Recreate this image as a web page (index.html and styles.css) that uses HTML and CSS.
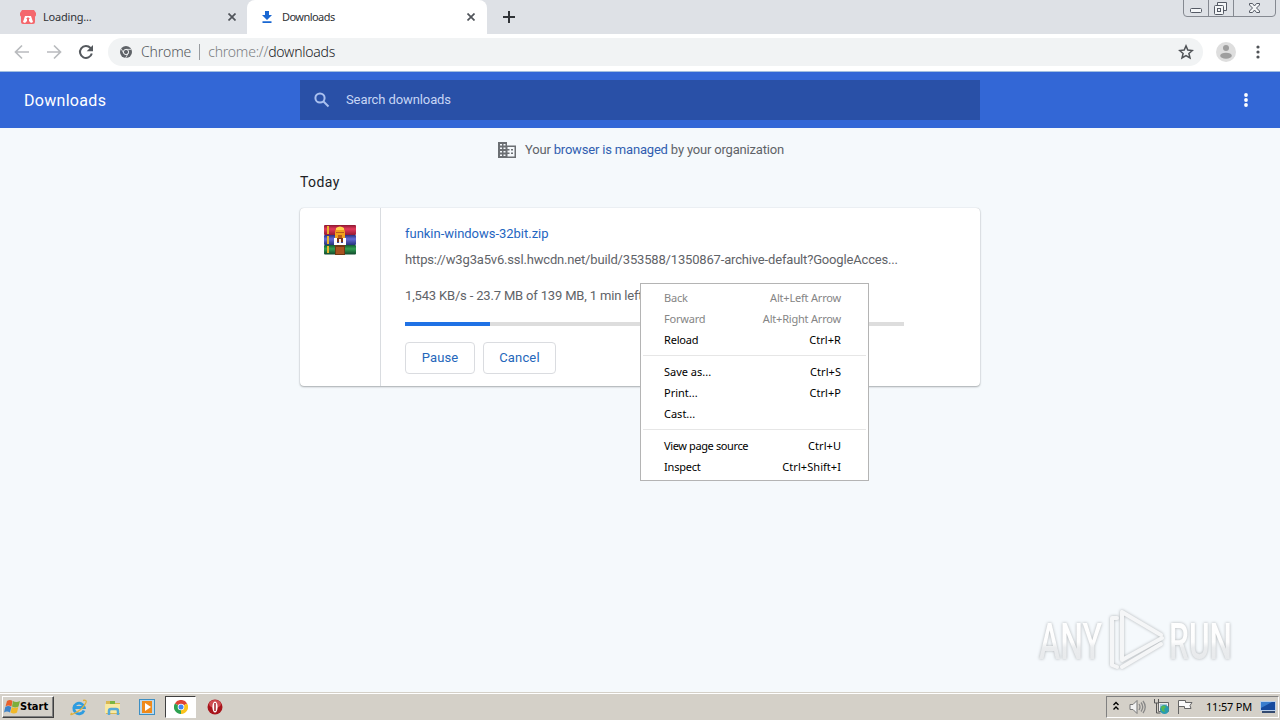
FILE: index.html
```html
<!DOCTYPE html>
<html lang="en">
<head>
<meta charset="utf-8">
<title>Downloads</title>
<link rel="stylesheet" href="styles.css">
</head>
<body>
<div class="screen">
  <header class="tabstrip">
    <div class="tab tab-idle">
      <svg class="favicon" width="16" height="16" viewBox="0 0 16 16"><path fill="#f4686d" d="M2 1h12l2 3v2a2 2 0 0 1-1 1.600V13q0 2-2 2H3q-2 0-2-2V7.600A2 2 0 0 1 0 6V4z"/><path fill="#fff" d="M5 7h6l2 6-2 1-2-2H7l-2 2-2-1z"/><path fill="#f4686d" d="M8 8l2 2H9v2H7v-2H6z"/></svg>
      <span class="tab-title">Loading...</span>
      <svg class="tab-close" width="8" height="8" viewBox="0 0 8 8"><path d="M.5.5l7 7M7.500.5l-7 7"/></svg>
    </div>
    <div class="tab tab-active">
      <svg class="favicon" width="16" height="16" viewBox="0 0 16 16"><path fill="#1967d2" d="M6 2h4v4h3L8 11 3 6h3zM3.500 12.300h9V14h-9z"/></svg>
      <span class="tab-title">Downloads</span>
      <svg class="tab-close" width="8" height="8" viewBox="0 0 8 8"><path d="M.5.5l7 7M7.500.5l-7 7"/></svg>
    </div>
    <svg class="new-tab" width="12" height="12" viewBox="0 0 12 12"><path d="M6 0v12M0 6h12"/></svg>
    <svg class="window-buttons" width="94" height="18" viewBox="0 0 94 18">
      <path class="frame" d="M.5 0v13q0 3.500 3.500 3.500h85q3.500 0 3.500-3.500V0M25.500 0v16M50.500 0v16"/>
      <rect class="glyph" x="7.500" y="8.500" width="11" height="4" rx="1"/>
      <path class="glyph" d="M34.500 5V2.500h9v8H41"/><rect class="glyph" x="31.500" y="5.500" width="9" height="9" rx="1"/><rect class="glyph" x="34.500" y="8.500" width="3" height="3"/>
      <path class="glyph" d="M66.500 3.500h3l2 2.500 2-2.500h3V5l-3 3 3 3v1.500h-3l-2-2.500-2 2.500h-3V11l3-3-3-3z"/>
    </svg>
  </header>

  <nav class="toolbar">
    <svg class="nav-icon muted" width="16" height="16" viewBox="0 0 16 16"><path d="M15 8H2M8 1.500L1.500 8 8 14.500"/></svg>
    <svg class="nav-icon muted" width="16" height="16" viewBox="0 0 16 16"><path d="M1 8h13M8 1.500L14.500 8 8 14.500"/></svg>
    <svg class="nav-icon" width="16" height="16" viewBox="0 0 16 16"><path d="M13.800 9.500A6 6 0 1 1 12.500 4L14 5.500"/><path class="solid" d="M15 1v6.300H8.700z"/></svg>
    <div class="omnibox">
      <svg class="site-icon" width="12" height="12" viewBox="0 0 12 12"><circle cx="6" cy="6" r="6" fill="#5f6368"/><circle cx="6" cy="6" r="2.600" fill="#5f6368" stroke="#f1f3f4" stroke-width="1"/><path stroke="#f1f3f4" stroke-width=".8" fill="none" d="M6 3.400h5.300M3.800 7.300L1.100 2.700M8.200 7.300L5.600 12"/></svg>
      <span class="site-name">Chrome</span><span class="site-rule"></span>
      <span class="address"><span class="scheme">chrome://</span>downloads</span>
      <svg class="star" width="16" height="16" viewBox="0 0 16 16"><path d="M8 1.900l1.800 4.200 4.600.4-3.500 3 1.100 4.500L8 11.600 4 14l1.100-4.500-3.500-3 4.600-.4z"/></svg>
    </div>
    <svg class="avatar" width="20" height="20" viewBox="0 0 20 20"><circle cx="10" cy="10" r="10" fill="#dedede"/><circle cx="10" cy="6" r="3" fill="#9e9e9e"/><ellipse cx="10" cy="13.700" rx="5.800" ry="3" fill="#9e9e9e"/></svg>
    <svg class="dots" width="4" height="14" viewBox="0 0 4 14"><circle cx="2" cy="2" r="1.600"/><circle cx="2" cy="7" r="1.600"/><circle cx="2" cy="12" r="1.600"/></svg>
  </nav>

  <section class="app-bar">
    <h1 class="app-title">Downloads</h1>
    <div class="search">
      <svg width="16" height="16" viewBox="0 0 16 16"><circle cx="6" cy="6" r="4.600"/><path d="M9.500 9.500l5 5"/></svg>
      <span class="search-hint">Search downloads</span>
    </div>
    <svg class="dots light" width="4" height="14" viewBox="0 0 4 14"><circle cx="2" cy="2" r="1.900"/><circle cx="2" cy="7" r="1.900"/><circle cx="2" cy="12" r="1.900"/></svg>
  </section>

  <main class="content">
    <div class="managed">
      <svg width="18" height="16" viewBox="0 0 18 16"><path fill="#6b6f73" fill-rule="evenodd" d="M0 0h9v3.500h9V16H0zM2 2v1.500h2V2zM5.500 2v1.500h2V2zM2 5.500V7h2V5.500zM5.500 5.500V7h2V5.500zM2 9v1.500h2V9zM5.500 9v1.500h2V9zM2 12.500V14h2v-1.500zM5.500 12.500V14h2v-1.500zM9.500 5v2h2v1.500h-2v2h2V12h-2v2.500h7V5zM13 7h2v1.500h-2zM13 10.500h2V12h-2z"/></svg>
      <p class="managed-text">Your <a>browser is managed</a> by your organization</p>
    </div>
    <h2 class="day">Today</h2>
    <article class="card">
      <div class="file-icon">
        <svg width="32" height="32" viewBox="0 0 32 32">
          <defs>
            <linearGradient id="red" x2="0" y2="1"><stop stop-color="#8b1730"/><stop offset=".4" stop-color="#e33a5b"/><stop offset="1" stop-color="#951b35"/></linearGradient>
            <linearGradient id="blue" x2="0" y2="1"><stop stop-color="#28337f"/><stop offset=".4" stop-color="#646bd6"/><stop offset="1" stop-color="#26347b"/></linearGradient>
            <linearGradient id="green" x2="0" y2="1"><stop stop-color="#135b33"/><stop offset=".4" stop-color="#32a052"/><stop offset="1" stop-color="#11482c"/></linearGradient>
          </defs>
          <rect y="1" width="32" height="10" rx="1" fill="url(#red)"/><rect y="11" width="32" height="10" rx="1" fill="url(#blue)"/><rect y="21" width="32" height="9.500" rx="1" fill="url(#green)"/>
          <path fill="#e9b42e" d="M3 2h2v8H3zM3 12h2v8H3zM3 22h2v7H3z"/><path fill="#6d3a16" d="M11 21h10v10H11z"/><path fill="#a95221" d="M12 23h8v7h-8z"/>
          <path fill="#f1a31d" d="M11 9q0-6 5-6t5 6v6H11z"/><path fill="#ffd34c" d="M12 4q4-3 8 0v2h-8z"/><path fill="#b75d1c" d="M12 8h8v1h-8zM14 11h4v3h-4z"/>
          <path fill="#fff" d="M10 14h3v5h6v-5h3v7H10z"/><path fill="#7b3418" d="M13 14h6v4h-6z"/><path fill="#f4f1e8" d="M15 15h2v4h-2z"/>
        </svg>
      </div>
      <div class="details">
        <a class="file-name">funkin-windows-32bit.zip</a>
        <span class="file-url">https://w3g3a5v6.ssl.hwcdn.net/build/353588/1350867-archive-default?GoogleAcces...</span>
        <span class="file-status">1,543 KB/s - 23.7 MB of 139 MB, 1 min left</span>
        <div class="progress"><div class="progress-value"></div></div>
        <div class="actions"><button class="btn pause">Pause</button><button class="btn cancel">Cancel</button></div>
      </div>
    </article>
    <svg class="watermark" width="230" height="80" viewBox="0 0 230 80">
      <defs><linearGradient id="wm" x2="0" y2="1"><stop stop-color="#fff"/><stop offset=".5" stop-color="#fdfdfd"/><stop offset=".6" stop-color="#eaecee"/><stop offset="1" stop-color="#e5e7e9"/></linearGradient></defs>
      <text x="9" y="53" textLength="63" lengthAdjust="spacingAndGlyphs">ANY</text>
      <text x="139" y="53" textLength="63" lengthAdjust="spacingAndGlyphs">RUN</text>
      <path class="mark" d="M87 12h-5v47l5 2"/>
      <path class="mark" d="M131 29L92 6v48l40-22"/>
      <path class="mark" d="M131 38L92 61"/>
    </svg>
  </main>

  <footer class="taskbar">
    <div class="start">
      <svg width="16" height="16" viewBox="0 0 16 16"><path fill="#e8602c" d="M3 2q3-2 5.500 0L7.500 7.500Q4 5.500 1.500 7.500z"/><path fill="#7dae3b" d="M9 2q3 2 7 0l-1.500 5.500Q11 9.500 8 7.500z"/><path fill="#3d83c9" d="M1.300 8q3-2 6 0l-1.300 5.500Q3 11.500 0 13.500z"/><path fill="#f1b828" d="M7.800 8q3 2 6.500 0L13 13.500q-3 2-6.500 0z"/></svg>
      <span>Start</span>
    </div>
    <div class="launchers">
      <svg width="18" height="18" viewBox="0 0 18 18"><path fill="none" stroke="#2e9ce0" stroke-width="2.800" d="M14 12.500A5.300 5.300 0 1 1 14.300 9.500H5"/><path fill="none" stroke="#e0b23d" stroke-width="1.300" d="M2 15q-3 3 2 .5 9-4 12-11 1-3-3-2"/></svg>
      <svg width="18" height="18" viewBox="0 0 18 18"><path fill="#d9b851" d="M2 3h6l1 2h7v11H2z"/><path fill="#f9e9a1" d="M1 6h15v9H1z"/><path fill="#7ab441" d="M6 3h5v3H6z"/><path fill="none" stroke="#55a9d7" stroke-width="2.500" d="M5 17v-4q0-2 2-2h5q2 0 2 2v4"/></svg>
      <svg width="18" height="18" viewBox="0 0 18 18"><rect x="1.500" y="1.500" width="15" height="15" fill="#b9d9ee" stroke="#3e8fc3"/><rect x="4" y="3" width="10" height="12" fill="#ef8a1b"/><circle cx="9" cy="9" r="4.800" fill="#f08b1d"/><path fill="#fff" d="M7 5l6 4-6 4z"/></svg>
    </div>
    <div class="task-active">
      <svg width="14" height="14" viewBox="0 0 14 14"><path fill="#de4335" d="M7 7L.9 3.500a7 7 0 0 1 12.200 0z"/><path fill="#fbc31c" d="M7 7l6.100-3.500A7 7 0 0 1 7 14z"/><path fill="#2da150" d="M7 7v7A7 7 0 0 1 .9 3.500z"/><circle cx="7" cy="7" r="3.300" fill="#fff"/><circle cx="7" cy="7" r="2.500" fill="#4285f4"/></svg>
    </div>
    <svg class="opera" width="16" height="16" viewBox="0 0 16 16"><circle cx="8" cy="8" r="7.500" fill="#a8141b"/><ellipse cx="8" cy="5" rx="6" ry="4" fill="#cf4c51"/><ellipse cx="8" cy="8" rx="2.600" ry="5.500" fill="#fff"/><path fill="#9d1117" d="M7.300 4h1.400v8H7.300z"/></svg>
    <div class="tray">
      <svg width="8" height="12" viewBox="0 0 8 12"><path fill="none" stroke="#000" stroke-width="1.400" d="M1.500 4L4 1.500 6.500 4M1.500 8.500L4 6l2.500 2.500"/></svg>
      <svg class="volume" width="17" height="16" viewBox="0 0 17 16"><path fill="#f2f2f2" stroke="#777" d="M1 5.500h3l4-4v13l-4-4H1z"/><path fill="none" stroke="#888" stroke-width="1.300" d="M10 5q2 3 0 6M12 3.500q3.500 4.500 0 9M14 2q4.500 6 0 12"/></svg>
      <svg class="network" width="17" height="16" viewBox="0 0 17 16"><path fill="#eee" stroke="#666" d="M5.500 3.500h10v9h-10z"/><path fill="#a9c9d9" d="M7 5h7v6H7z"/><path fill="none" stroke="#555" d="M1.500 0v4h4V0M3.500 4v10h4"/><circle cx="11.500" cy="10.500" r="4.500" fill="#299bb0"/><path fill="#58b84f" d="M8 8q3-3 5 0l-2 2 1 3-3-1z"/></svg>
      <svg class="flag" width="17" height="16" viewBox="0 0 17 16"><path fill="#fafafa" stroke="#666" d="M2.500 15V1.500h7v2H16l-2 3 1 3H8.500v-2h-6"/></svg>
      <span class="clock">11:57 PM</span>
      <svg class="desktop" width="16" height="14" viewBox="0 0 16 14"><path fill="#b9cee8" d="M0 1h16v10H0z"/><path fill="#164a9e" d="M1 2h14v8H1z"/><path fill="#397dce" d="M1 2h11L1 8z"/><path fill="#334a70" d="M2 11h13v2H2z"/></svg>
    </div>
  </footer>

  <div class="menu">
    <div class="item disabled"><span>Back</span><kbd>Alt+Left Arrow</kbd></div>
    <div class="item disabled"><span>Forward</span><kbd>Alt+Right Arrow</kbd></div>
    <div class="item"><span>Reload</span><kbd>Ctrl+R</kbd></div>
    <hr class="menu-rule">
    <div class="item"><span class="ellipsis">Save as...</span><kbd>Ctrl+S</kbd></div>
    <div class="item"><span class="ellipsis">Print...</span><kbd>Ctrl+P</kbd></div>
    <div class="item"><span class="ellipsis">Cast...</span></div>
    <hr class="menu-rule">
    <div class="item"><span class="long">View page source</span><kbd>Ctrl+U</kbd></div>
    <div class="item"><span>Inspect</span><kbd class="wide">Ctrl+Shift+I</kbd></div>
  </div>
</div>
</body>
</html>
```
FILE: styles.css
```css
* { box-sizing: border-box; }
body { margin: 0; font-family: Roboto, "Liberation Sans", sans-serif; font-size: 13px; }
svg { display: block; flex: none; }
h1, h2, p { margin: 0; font-weight: 400; }
.screen { position: relative; width: 1280px; height: 720px; overflow: hidden; display: flex; flex-direction: column; background: #f5f9fc; white-space: nowrap; }

.tabstrip { display: flex; height: 34px; background: #dee1e6; }
.tab { display: flex; align-items: center; height: 34px; font-family: "Noto Sans", sans-serif; font-size: 11px; color: #303236; }
.tab-idle { width: 247px; padding: 0 11px 0 20px; border-bottom-right-radius: 8px; }
.tab-active { width: 240px; padding: 0 12px 0 12px; background: #fff; border-radius: 8px 8px 0 0; }
.tab-title { flex: 1; margin-left: 7px; padding-bottom: 2px; letter-spacing: -.5px; }
.tab-active .tab-title { letter-spacing: -.6px; }
.tab-title { letter-spacing: -.2px; }
.tab-idle .tab-title { letter-spacing: -.2px; }
.tab-active .tab-title { letter-spacing: -.55px; }
.tab-close { fill: none; stroke: #50545a; stroke-width: 1.7; }
.new-tab { margin: 11px 0 0 16px; fill: none; stroke: #303337; stroke-width: 2; }
.window-buttons { margin-left: auto; margin-right: 3px; fill: none; }
.frame { stroke: #858991; }
.glyph { fill: #f4f6f8; stroke: #555a65; }

.toolbar { display: flex; align-items: center; height: 38px; padding: 0 20px 2px 14px; background: #fff; border-bottom: 1px solid #a3c0e0; }
.nav-icon { margin-right: 16px; fill: none; stroke: #55595e; stroke-width: 2; }
.nav-icon.muted { stroke: #b9bbbe; stroke-width: 1.7; }
.solid { fill: #55595e; stroke: none; }
.omnibox { display: flex; align-items: center; width: 1095px; height: 28px; margin-left: -2px; padding: 0 9px 0 12px; border-radius: 14px; background: #f1f3f4; font-family: "Noto Sans", sans-serif; font-size: 14px; font-weight: 300; color: #202124; }
.site-name { margin-left: 9px; letter-spacing: -.1px; color: #55585c; }
.site-rule { width: 1px; height: 16px; margin: 0 8px; background: #999ca0; }
.address { flex: 1; letter-spacing: -.22px; }
.scheme { color: #7b7e82; }
.star { fill: none; stroke: #505357; stroke-width: 1.5; }
.avatar { margin-left: 13px; }
.dots { margin-left: auto; fill: #505357; }
.dots.light { fill: #fff; }

.app-bar { display: flex; align-items: center; height: 56px; padding: 0 32px 0 24px; background: #3367d6; color: #fff; }
.app-title { width: 276px; font-size: 16px; letter-spacing: .3px; }
.search { display: flex; align-items: center; width: 680px; height: 40px; padding-left: 14px; background: #2950a7; color: #c7d6f5; }
.search svg { fill: none; stroke: #a9c0ef; stroke-width: 2; }
.search-hint { margin-left: 16px; padding-bottom: 2px; letter-spacing: -.1px; }

.content { position: relative; flex: 1; padding: 14px 300px 0; }
.managed { display: flex; align-items: center; justify-content: center; height: 16px; padding-left: 2px; color: #5f6368; }
.managed-text { margin-left: 9px; padding-bottom: 2px; letter-spacing: -.18px; }
.managed a { color: #315eb0; }
.day { height: 18px; margin-top: 15px; font-size: 14px; line-height: 18px; letter-spacing: .4px; color: #202124; }
.card { display: flex; height: 178px; margin-top: 17px; background: #fff; border-radius: 4px; box-shadow: 0 1px 2px rgba(60,64,67,.4), 0 0 1px rgba(60,64,67,.3); }
.file-icon { width: 81px; padding: 16px 24px; border-right: 1px solid #d9dce0; }
.details { display: flex; flex-direction: column; width: 523px; padding: 17px 0 0 24px; color: #5f6368; line-height: 18px; }
.file-name { color: #1f66c1; letter-spacing: -.02px; }
.file-url { margin-top: 8px; letter-spacing: -.17px; }
.file-status { margin-top: 18px; letter-spacing: -.17px; }
.progress { height: 4px; margin-top: 17px; background: #ddd; }
.progress-value { width: 85px; height: 4px; background: #2072e5; }
.actions { display: flex; gap: 8px; margin-top: 16px; }
.btn { height: 32px; padding: 0 0 1px; border: 1px solid #dadce0; border-radius: 4px; background: #fff; font: 400 13px Roboto, sans-serif; letter-spacing: .15px; color: #2466ba; }
.pause { width: 70px; }
.cancel { width: 73px; }
.watermark { position: absolute; left: 1030px; top: 478px; filter: drop-shadow(0 0 1.5px #aeb2b5); }
.watermark text { font: 500 50px Roboto, sans-serif; fill: url(#wm); }
.mark { fill: none; stroke: #f5f6f7; stroke-width: 4; stroke-linejoin: round; stroke-linecap: round; }

.taskbar { display: flex; align-items: center; height: 28px; padding: 2px 1px 2px 2px; background: #d4d0c8; border-top: 1px solid #d4d0c8; box-shadow: inset 0 1px #fff; }
.start { display: flex; align-items: center; width: 52px; height: 22px; padding-left: 1px; border: 1px solid; border-color: #fff #404040 #404040 #fff; box-shadow: inset -1px -1px #808080; font: bold 11px "DejaVu Sans Condensed", "DejaVu Sans", sans-serif; color: #000; }
.launchers { display: flex; gap: 16px; margin-left: 16px; }
.task-active { display: flex; align-items: center; justify-content: center; width: 31px; height: 22px; margin-left: 9px; background: #fff; border: 1px solid; border-color: #404040 #fff #fff #404040; }
.opera { margin-left: 11px; }
.tray { display: flex; align-items: center; width: 173px; height: 22px; margin-left: auto; padding: 0 2px 0 5px; border: 1px solid; border-color: #808080 #fff #fff #808080; color: #000; }
.volume { margin-left: 9px; }
.network { margin-left: 7px; }
.flag { margin-left: 6px; }
.clock { margin-left: auto; font: 11px "Noto Sans", sans-serif; letter-spacing: -.2px; }
.desktop { margin-left: 8px; }

.menu { position: absolute; left: 640px; top: 283px; width: 229px; height: 198px; padding: 3px 0 5px; background: #fff; border: 1px solid #b4b4b4; font: 11px "Noto Sans", sans-serif; letter-spacing: -.2px; color: #000; }
.item { display: flex; justify-content: space-between; align-items: center; height: 21px; padding: 0 27px 0 23px; }
.disabled { color: #858585; }
.item kbd { font: inherit; }
.item:not(.disabled) kbd { letter-spacing: .05px; }
.item .wide { letter-spacing: .1px; }
.item .long { letter-spacing: -.38px; }
.item .ellipsis { letter-spacing: 0; }
.menu-rule { height: 1px; margin: 5px 2px; border: 0; background: #e6e6e6; }
```
